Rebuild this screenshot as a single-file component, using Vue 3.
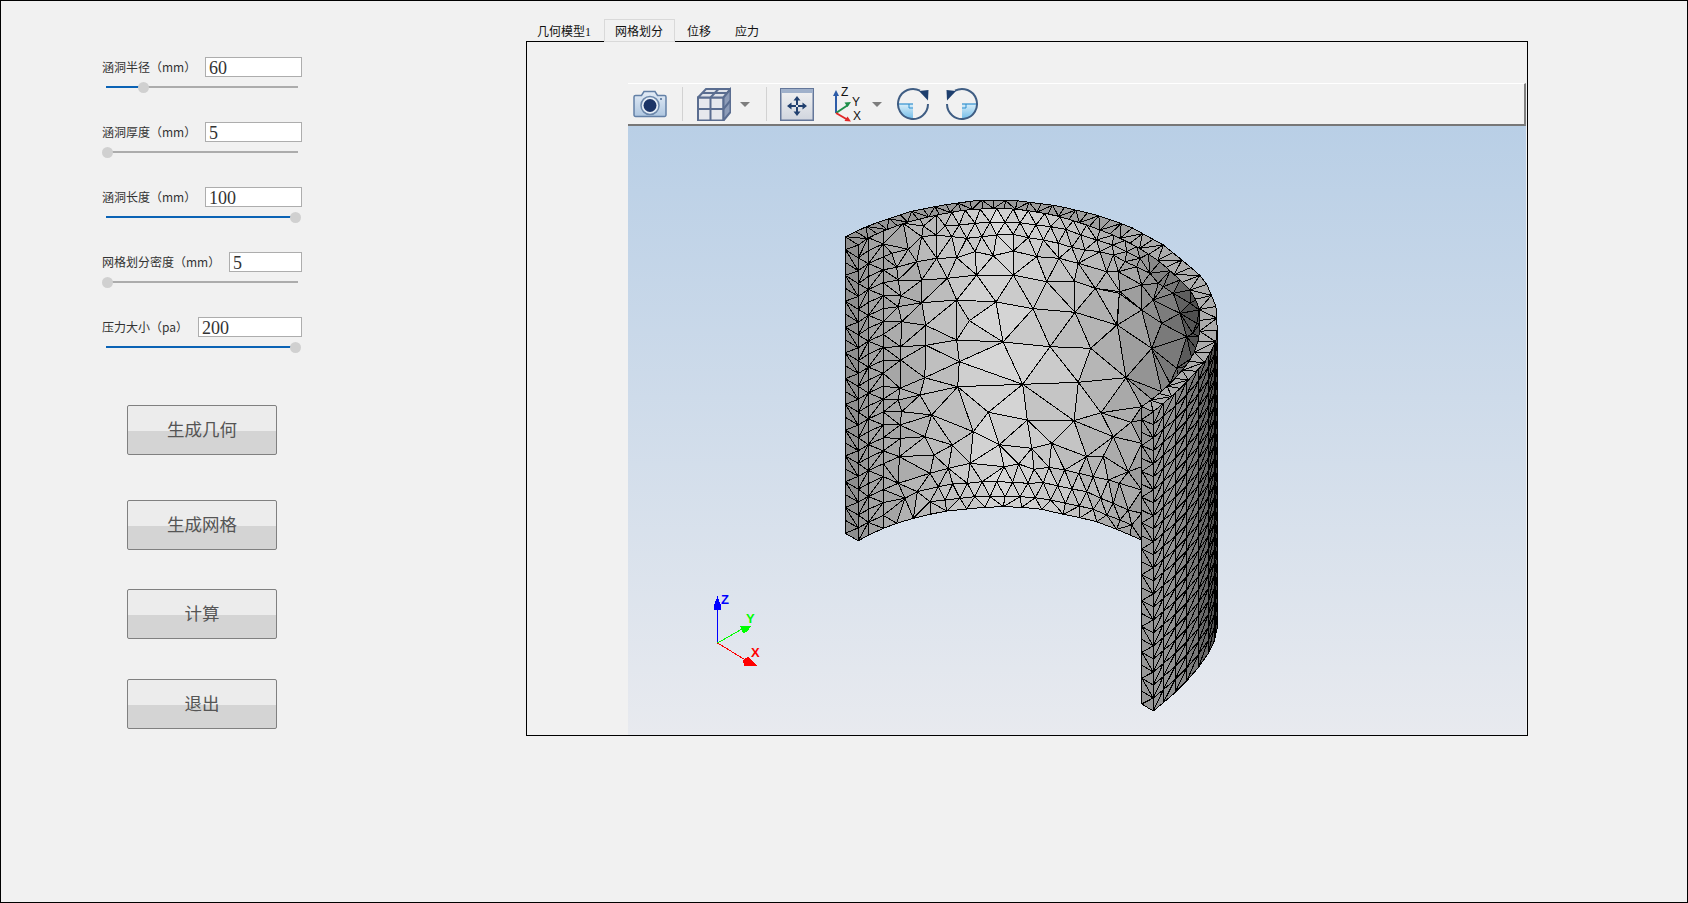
<template>
  <div class="window">
    <div class="side">
      <div v-for="p in params" :key="p.label" class="param">
        <div class="param-head">
          <span class="param-label">{{ p.label }}</span>
          <div class="param-input" :style="{ width: p.inputWidth + 'px' }">{{ p.value }}</div>
        </div>
        <div class="slider">
          <div class="slider-fill" :style="{ width: p.pos + 'px' }"></div>
          <div class="slider-thumb" :style="{ left: p.pos + 'px' }"></div>
        </div>
      </div>

      <button
        v-for="b in buttons"
        :key="b.text"
        class="action"
        :style="{ marginTop: b.gap + 'px' }">{{ b.text }}</button>
    </div>

    <div class="main">
      <div class="tabs">
        <div v-for="(t, i) in tabs" :key="t" class="tab" :class="{ active: i === 1 }">{{ t }}</div>
      </div>

      <div class="panel">
        <div class="viewer">
          <div class="toolbar">
            <!-- 相机 -->
            <svg class="ic camera" width="34" height="28" viewBox="0 0 34 28">
              <defs>
                <linearGradient id="camBody" x1="0" y1="0" x2="0" y2="1">
                  <stop offset="0" stop-color="#e4ecf6" />
                  <stop offset="1" stop-color="#aec6e0" />
                </linearGradient>
              </defs>
              <path d="M2.500 5.500h6l2.500-4h11l2.500 4h7a1.500 1.500 0 0 1 1.500 1.500v18a1.500 1.500 0 0 1-1.500 1.500h-29a1.500 1.500 0 0 1-1.500-1.500v-18a1.500 1.500 0 0 1 1.500-1.500z" fill="url(#camBody)" stroke="#6380a6" stroke-width="1.500" />
              <circle cx="17" cy="15.500" r="9" fill="#e8eff7" stroke="#6c87aa" stroke-width="1.500" />
              <circle cx="17" cy="15.500" r="6.500" fill="#1c3466" />
              <circle cx="28" cy="9" r="1" fill="#4d6a92" />
            </svg>
            <div class="sep sep-a"></div>

            <!-- 视图立方体 -->
            <svg class="ic cube" width="34" height="34" viewBox="0 0 34 34">
              <path d="M1 10.500h25.500v23h-25.500z" fill="#e6e8ed" stroke="#5a6d90" stroke-width="2" />
              <path d="M1 10.500l8-8.500h24.500l-7 8.500z" fill="#dfe3ea" stroke="#5a6d90" stroke-width="2" />
              <path d="M26.500 10.500l7-8.500v23l-7 8.500z" fill="#8d9cb8" stroke="#5a6d90" stroke-width="2" />
              <path d="M1 22h25.500l7-8.500M13.500 10.500v23M13.500 10.500l8-8.500M5 6h25" fill="none" stroke="#5a6d90" stroke-width="2" />
            </svg>
            <div class="drop drop-a"></div>
            <div class="sep sep-b"></div>

            <!-- 适合窗口 -->
            <svg class="ic fit" width="34" height="33" viewBox="0 0 34 33">
              <defs>
                <linearGradient id="fitBody" x1="0" y1="0" x2="0" y2="1">
                  <stop offset="0" stop-color="#f3f3f3" />
                  <stop offset="1" stop-color="#d0d5de" />
                </linearGradient>
              </defs>
              <rect x="0.750" y="0.750" width="32.500" height="31.500" fill="url(#fitBody)" stroke="#64779a" stroke-width="1.500" />
              <rect x="1" y="1" width="32" height="4" fill="#a0b1cb" />
              <path d="M17 8l-3.500 4.500h2.500v4.500h2v-4.500h2.500zM17 28l-3.500-4.500h2.500v-4.500h2v4.500h2.500zM7 18l4.500-3.500v2.500h4.500v2h-4.500v2.500zM27 18l-4.500-3.500v2.500h-4.500v2h4.500v2.500z" fill="#21406f" />
            </svg>

            <!-- 坐标系 -->
            <svg class="ic triad" width="32" height="40" viewBox="0 -3 32 40">
              <path d="M3 26V7" stroke="#2d5ca8" stroke-width="2" />
              <path d="M3 3l-3 6h6z" fill="#2d5ca8" />
              <path d="M3 26l12-8" stroke="#1f8f4a" stroke-width="2" />
              <path d="M18 15l-6.500 0.500 3 4.500z" fill="#1f8f4a" />
              <path d="M3 26l12 7" stroke="#e02828" stroke-width="2" />
              <path d="M18 34.500l-6.500-0.500 3-4.500z" fill="#e02828" />
              <text x="8" y="9" class="triad-txt">Z</text>
              <text x="19" y="19" class="triad-txt">Y</text>
              <text x="20" y="33" class="triad-txt">X</text>
            </svg>
            <div class="drop drop-b"></div>

            <!-- 旋转 -->
            <svg v-for="r in rotations" :key="r" class="ic" :class="r" width="34" height="34" viewBox="0 0 34 34">
              <defs>
                <linearGradient :id="r + 'Fill'" x1="0" y1="0" x2="0" y2="1">
                  <stop offset="0" stop-color="#d8eef9" />
                  <stop offset="1" stop-color="#72bce8" />
                </linearGradient>
              </defs>
              <path d="M2 17h15v15a15 15 0 0 1-15-15z" :fill="`url(#${r}Fill)`" />
              <path d="M2 17h15" stroke="#2f8fcf" stroke-width="1.200" />
              <path d="M13 17v4h4" fill="none" stroke="#2f8fcf" stroke-width="1" />
              <path d="M32 17A15 15 0 1 1 24 3.700" fill="none" stroke="#3f5d83" stroke-width="2" />
              <path d="M23 4l9.500-1-0.500 10.500z" fill="#1e3f6e" />
            </svg>
          </div>

          <div class="viewport">
            <svg class="scene" width="898" height="609" viewBox="0 0 898 609">
              <g stroke="#000" stroke-width="1" stroke-linejoin="round" shape-rendering="crispEdges">
                <path v-for="(t, i) in mesh" :key="i" :d="t.d" :fill="t.fill" />
              </g>

              <!-- 左下角坐标轴 -->
              <g shape-rendering="crispEdges">
                <path d="M89.500 517V477" stroke="#0000ff" fill="none" />
                <path d="M89.500 470l-4 11 1 3h6l1-3z" fill="#0000ff" />
                <path d="M89.500 517l28-16" stroke="#00ff00" fill="none" />
                <path d="M123 500l-11 0 3 7 4-1z" fill="#00ff00" />
                <path d="M89.500 517l28 17" stroke="#ff0000" fill="none" />
                <path d="M129 540l-9-9-5 3 1 6z" fill="#ff0000" />
              </g>
              <text x="93" y="478" class="axis-txt" fill="#0000ff">Z</text>
              <text x="118" y="497" class="axis-txt" fill="#00ff00">Y</text>
              <text x="123" y="531" class="axis-txt" fill="#ff0000">X</text>
            </svg>
          </div>
        </div>
      </div>
    </div>
  </div>
</template>

<script setup>
// 滑块轨道起点对应 thumb 的偏移
const params = [
  { label: '涵洞半径（mm）', value: '60', inputWidth: 97, pos: 37 },
  { label: '涵洞厚度（mm）', value: '5', inputWidth: 97, pos: 1 },
  { label: '涵洞长度（mm）', value: '100', inputWidth: 97, pos: 189 },
  { label: '网格划分密度（mm）', value: '5', inputWidth: 73, pos: 1 },
  { label: '压力大小（pa）', value: '200', inputWidth: 104, pos: 189 }
]

const buttons = [
  { text: '生成几何', gap: 23 },
  { text: '生成网格', gap: 45 },
  { text: '计算', gap: 39 },
  { text: '退出', gap: 40 }
]

const tabs = ['几何模型1', '网格划分', '位移', '应力']
const rotations = ['rot-cw', 'rot-ccw']

/* ---------- 网格：坐标按 3 倍放大的描点记录，最后换算到视口 ---------- */
const px = (x) => (202 + x / 3).toFixed(1)
const py = (y) => (64 + y / 3).toFixed(1)

const lerp = (a, b, t) => a + (b - a) * t

const jitter = (x, y, amount) => {
  const s = Math.sin(x * 12.9898 + y * 78.233) * 43758.5453
  return (s - Math.floor(s) - 0.5) * 2 * amount
}

const grey = (v) => {
  const c = Math.max(0, Math.min(255, Math.round(v)))
  return `rgb(${c},${c},${c})`
}

const tri = (a, b, c, fill) => ({
  d: `M${px(a[0])} ${py(a[1])}L${px(b[0])} ${py(b[1])}L${px(c[0])} ${py(c[1])}Z`,
  fill
})

// 内表面的明暗
const innerShade = (x, y) => {
  let v
  if (x < 500) v = lerp(152, 212, (x - 85) / 415)
  else if (x < 700) v = lerp(212, 196, (x - 500) / 200)
  else if (x < 900) v = lerp(196, 165, (x - 700) / 200)
  else if (x < 1000) v = lerp(165, 130, (x - 900) / 100)
  else v = lerp(130, 70, (x - 1000) / 110)
  return v + jitter(x, y, 6)
}

// 两条折线之间的之字形三角带
const strip = (left, right, shade, flip) => {
  const out = []
  for (let k = 0; k < left.length - 1; k++) {
    const a = left[k], b = right[k], c = right[k + 1], d = left[k + 1]
    const m = [(a[0] + c[0]) / 2, (a[1] + c[1]) / 2]
    const f = grey(shade(m[0], m[1]))
    if ((flip ? k + 1 : k) % 2 === 0) out.push(tri(a, b, d, f), tri(b, c, d, f))
    else out.push(tri(a, b, c, f), tri(a, c, d, f))
  }
  return out
}

const column = (x, top, bottom, n) => {
  const pts = []
  for (let k = 0; k <= n; k++) pts.push([x, lerp(top, bottom, k / n)])
  return pts
}

const resample = (line, n) => {
  const len = [0]
  for (let i = 1; i < line.length; i++) {
    len.push(len[i - 1] + Math.hypot(line[i][0] - line[i - 1][0], line[i][1] - line[i - 1][1]))
  }
  const total = len[len.length - 1]
  const out = []
  let j = 0
  for (let k = 0; k <= n; k++) {
    const s = (total * k) / n
    while (j < line.length - 2 && len[j + 1] < s) j++
    const t = (s - len[j]) / (len[j + 1] - len[j])
    out.push([lerp(line[j][0], line[j + 1][0], t), lerp(line[j][1], line[j + 1][1], t)])
  }
  return out
}

const atX = (line, x) => {
  for (let i = 0; i < line.length - 1; i++) {
    if (x <= line[i + 1][0]) {
      const t = (x - line[i][0]) / (line[i + 1][0] - line[i][0])
      return lerp(line[i][1], line[i + 1][1], t)
    }
  }
  return line[line.length - 1][1]
}

// Bowyer-Watson
const delaunay = (input) => {
  const pts = input.concat([[-5000, -5000], [7000, -5000], [1000, 9000]])
  const n = input.length
  let tris = [[n, n + 1, n + 2]]
  const inCircle = (t, p) => {
    const [a, b, c] = t.map((i) => pts[i])
    const ax = a[0] - p[0], ay = a[1] - p[1]
    const bx = b[0] - p[0], by = b[1] - p[1]
    const cx = c[0] - p[0], cy = c[1] - p[1]
    const det =
      (ax * ax + ay * ay) * (bx * cy - cx * by) -
      (bx * bx + by * by) * (ax * cy - cx * ay) +
      (cx * cx + cy * cy) * (ax * by - bx * ay)
    const orient = (b[0] - a[0]) * (c[1] - a[1]) - (b[1] - a[1]) * (c[0] - a[0])
    return orient > 0 ? det > 0 : det < 0
  }
  for (let i = 0; i < n; i++) {
    const bad = [], keep = []
    for (const t of tris) (inCircle(t, pts[i]) ? bad : keep).push(t)
    const edges = new Map()
    for (const t of bad) {
      for (const [u, v] of [[t[0], t[1]], [t[1], t[2]], [t[2], t[0]]]) {
        const key = u < v ? `${u}_${v}` : `${v}_${u}`
        edges.set(key, edges.has(key) ? null : [u, v])
      }
    }
    tris = keep
    for (const e of edges.values()) if (e) tris.push([e[0], e[1], i])
  }
  return tris
    .filter((t) => t.every((i) => i < n))
    .map((t) => t.map((i) => pts[i]))
}

const inside = (poly, p) => {
  let hit = false
  for (let i = 0, j = poly.length - 1; i < poly.length; j = i++) {
    const a = poly[i], b = poly[j]
    if (a[1] > p[1] !== b[1] > p[1] && p[0] < ((b[0] - a[0]) * (p[1] - a[1])) / (b[1] - a[1]) + a[0]) hit = !hit
  }
  return hit
}

const buildMesh = () => {
  const ROWS = 23
  const out = []

  const outerRim = [[46, 140], [120, 105], [240, 65], [340, 45], [450, 30], [560, 32], [680, 47], [800, 75], [900, 110], [1000, 165], [1080, 230], [1125, 270], [1158, 350], [1162, 400], [1160, 450], [1130, 510], [1080, 565], [1030, 615], [970, 665]]
  const innerArc = [[160, 123], [220, 100], [270, 87], [320, 75], [365, 67], [405, 60], [450, 57], [500, 55], [550, 57], [595, 62], [645, 70], [690, 80], [730, 92], [770, 105], [810, 120], [850, 135], [885, 152], [920, 170], [955, 192], [990, 215], [1020, 242], [1050, 270], [1080, 300], [1098, 330], [1108, 360], [1110, 400], [1108, 440], [1098, 475], [1085, 505], [1065, 530], [1045, 555], [1020, 580], [995, 605], [965, 628], [935, 650]]
  const rightSide = [[935, 690], [935, 760], [935, 830], [935, 900], [935, 970], [935, 1050]]
  const bottomArc = [[900, 1035], [860, 1018], [800, 995], [750, 983], [700, 973], [635, 958], [575, 952], [520, 950], [465, 952], [410, 957], [350, 963], [300, 973], [250, 985], [200, 1000], [160, 1015]]

  // 外侧圆柱面
  const outerTop = [[970, 665], [1030, 615], [1080, 565], [1125, 510], [1150, 465], [1161, 420]]
  const outerCols = [970, 1000, 1035, 1070, 1105, 1135, 1152, 1161]
  const outerGrey = [150, 146, 136, 122, 104, 84, 66, 52]
  for (let c = 0; c < outerCols.length - 1; c++) {
    const x0 = outerCols[c], x1 = outerCols[c + 1]
    const l = column(x0, atX(outerTop, x0), atX(outerTop, x0) + 898, ROWS)
    const r = column(x1, atX(outerTop, x1), atX(outerTop, x1) + 898, ROWS)
    const f = grey(outerGrey[c])
    for (let k = 0; k < ROWS; k++) {
      out.push(tri(l[k], r[k], l[k + 1], f), tri(r[k], r[k + 1], l[k + 1], f))
    }
  }

  // 内表面
  const col160 = column(160, 123, 1015, ROWS)
  const traced = [
    [578, 583], [519, 456], [660, 470], [609, 356], [498, 336], [418, 392], [380, 450], [388, 515], [383, 590],
    [284, 563], [288, 466], [287, 406], [275, 338], [380, 330], [352, 265], [440, 255], [550, 255], [650, 275],
    [733, 273], [796, 295], [735, 367], [782, 475], [862, 405], [745, 577], [888, 563], [813, 668], [732, 692],
    [592, 690], [475, 667], [305, 675], [270, 615], [210, 595], [212, 510], [212, 470], [215, 395], [205, 350],
    [212, 318], [275, 270], [430, 725], [508, 764], [605, 775], [665, 760], [820, 798], [850, 740], [903, 697],
    [895, 845], [420, 820], [367, 765], [285, 740], [312, 795], [355, 835], [205, 880], [300, 850], [770, 800],
    [215, 665], [205, 630], [210, 705], [212, 745], [208, 800], [225, 925], [262, 905],
    [325, 890], [368, 882], [412, 880], [456, 875], [500, 875], [548, 877], [594, 880], [640, 878], [683, 887], [726, 897], [770, 905], [812, 925], [850, 940], [895, 960],
    [522, 830], [566, 822], [612, 838], [657, 832], [704, 840], [746, 850], [790, 860], [835, 870], [868, 880],
    [345, 930], [390, 925], [434, 920], [480, 920], [525, 920], [570, 920], [616, 923], [662, 930], [706, 940], [748, 948], [790, 958], [830, 975], [870, 990], [905, 1005], [300, 935],
    [280, 108], [345, 107], [388, 105], [435, 100], [480, 97], [525, 97], [570, 98], [618, 105], [662, 110], [708, 118], [752, 135], [800, 150], [848, 165], [890, 185],
    [235, 178], [275, 140], [318, 135], [365, 140], [410, 145], [455, 140], [500, 135], [550, 133], [595, 143], [640, 150], [685, 160], [725, 172], [765, 180], [810, 185], [850, 195], [885, 215], [930, 205],
    [185, 190], [320, 205], [380, 203], [435, 185], [490, 197], [550, 183], [620, 200], [687, 205], [745, 220], [830, 245], [920, 230], [865, 245], [960, 250], [985, 280],
    [200, 232], [260, 215], [868, 310], [935, 285], [205, 270],
    [860, 405], [935, 360], [995, 400], [965, 475], [1040, 535], [870, 305], [970, 330], [1030, 310], [1050, 370], [1080, 340], [1100, 400], [1070, 440], [1000, 290], [1088, 430]
  ]
  const poly = [...innerArc, ...rightSide, ...bottomArc]
  const nodes = [...innerArc, ...rightSide, ...bottomArc, ...col160.slice(1, -1), ...traced]
  for (const [a, b, c] of delaunay(nodes)) {
    const m = [(a[0] + b[0] + c[0]) / 3, (a[1] + b[1] + c[1]) / 3]
    if (inside(poly, m)) out.push(tri(a, b, c, grey(innerShade(m[0], m[1]))))
  }

  // 内表面左侧的规则网格
  const col85 = column(85, 165, 1052, ROWS)
  const col115 = column(115, 143, 1036, ROWS)
  out.push(...strip(col85, col115, () => 152, false))
  out.push(...strip(col115, col160, () => 162, true))

  // 顶部圆环
  const rimInner = resample([[85, 165], [120, 140], ...innerArc], 46)
  const rimOuter = resample(outerRim, 46)
  out.push(...strip(rimInner, rimOuter, (x) => (x < 900 ? lerp(146, 160, x / 900) : 172), false))

  // 两个剖切面
  const col46 = column(46, 140, 1030, ROWS)
  out.push(...strip(col46, col85, () => 142, false))
  const cutL = column(935, 650, 1542, ROWS)
  const cutR = column(970, 665, 1563, ROWS)
  out.push(...strip(cutL, cutR, () => 150, false))

  return out
}

const mesh = buildMesh()
</script>

<style scoped>
.window {
  box-sizing: border-box;
  width: 1688px;
  height: 903px;
  display: flex;
  background: #f1f1f1;
  border: 1px solid #000;
  overflow: hidden;
  font-family: "Noto Sans CJK SC", "Liberation Sans", sans-serif;
}

.side {
  box-sizing: border-box;
  width: 525px;
  flex: none;
  padding: 56px 0 0 101px;
}

.param {
  width: 200px;
  height: 65px;
}

.param-head {
  display: flex;
  justify-content: space-between;
  align-items: center;
  height: 20px;
}

.param-label {
  font-size: 12px;
  line-height: 20px;
  color: #333;
  white-space: nowrap;
}

.param-input {
  box-sizing: border-box;
  height: 20px;
  padding: 1px 0 0 3px;
  background: #fff;
  border: 1px solid #adadad;
  font-family: "Liberation Serif", serif;
  font-size: 18px;
  line-height: 18px;
  color: #333;
}

.slider {
  position: relative;
  width: 192px;
  height: 2px;
  margin: 9px 0 0 4px;
  background: #acacac;
}

.slider-fill {
  height: 100%;
  background: #0b63b5;
}

.slider-thumb {
  position: absolute;
  top: -4.500px;
  width: 11px;
  height: 11px;
  margin-left: -5.500px;
  border-radius: 50%;
  background: #d0d0d0;
}

.action {
  display: block;
  box-sizing: border-box;
  width: 150px;
  height: 50px;
  margin-left: 25px;
  padding: 0 0 4px;
  border: 1px solid #808080;
  border-radius: 2px;
  background: linear-gradient(#ececec 52%, #d4d4d4 52%);
  font-family: "Noto Sans CJK SC", sans-serif;
  font-size: 17.500px;
  color: #555;
}

.main {
  flex: none;
  width: 1002px;
  padding-top: 18px;
}

.tabs {
  display: flex;
  height: 22px;
  margin-left: -1px;
  font-family: "Liberation Serif", "Noto Sans CJK SC", serif;
  font-size: 12px;
  line-height: 26px;
  color: #111;
}

.tab {
  padding: 0 12px;
  white-space: nowrap;
}

.tab:first-child {
  padding-right: 13px;
}

.tab.active {
  position: relative;
  z-index: 1;
  height: 23px;
  box-sizing: border-box;
  padding: 0 11px 0 10px;
  border: 1px solid #d9d9d9;
  line-height: 24px;
  background: #f1f1f1;
}

.panel {
  box-sizing: border-box;
  height: 695px;
  padding: 41px 1px 0 101px;
  border: 1px solid #000;
}

.viewer {
  display: flex;
  flex-direction: column;
  height: 652px;
}

.toolbar {
  box-sizing: border-box;
  display: flex;
  align-items: center;
  flex: none;
  height: 43px;
  background: #f1f1f1;
  border-top: 1px solid #fff;
  border-bottom: 2px solid #777;
  border-right: 2px solid #808080;
}

.ic {
  display: block;
  flex: none;
}

.camera { margin-left: 5px; }
.cube { margin-left: 14px; }
.fit { margin-left: 13px; }
.triad { margin-left: 19px; }
.rot-cw { margin-left: 14px; }
.rot-ccw { margin-left: 15px; transform: scaleX(-1); }

.sep {
  flex: none;
  width: 1px;
  height: 34px;
  background: #d2d2d2;
}

.sep-a { margin-left: 15px; }
.sep-b { margin-left: 16px; }

.drop {
  flex: none;
  width: 0;
  height: 0;
  border-style: solid;
  border-width: 5px 5px 0;
  border-color: #7d7d7d transparent transparent;
}

.drop-a { margin-left: 9px; }
.drop-b { margin-left: 7px; }

.triad-txt {
  font-family: "Liberation Sans", sans-serif;
  font-size: 12px;
  fill: #111;
}

.viewport {
  flex: 1;
  min-height: 0;
  overflow: hidden;
  background: linear-gradient(#b9cfe6, #e8eaef);
}

.scene {
  display: block;
}

.axis-txt {
  font-family: "Liberation Sans", sans-serif;
  font-size: 13px;
  font-weight: 700;
}
</style>
